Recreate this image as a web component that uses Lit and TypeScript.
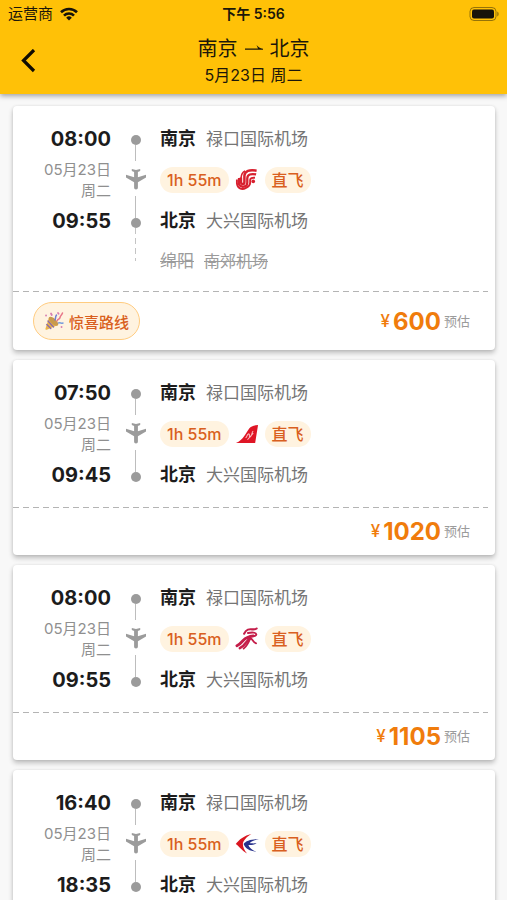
import { LitElement, html, css, svg, nothing, TemplateResult } from "lit";
import { customElement, property } from "lit/decorators.js";

type Airline = "airchina" | "sichuan" | "phoenix" | "eastern";

interface Flight {
  depart: string;
  arrive: string;
  airline: Airline;
  price: number;
  onward?: { city: string; airport: string };
}

const flights: Flight[] = [
  { depart: "08:00", arrive: "09:55", airline: "airchina", price: 600, onward: { city: "绵阳", airport: "南郊机场" } },
  { depart: "07:50", arrive: "09:45", airline: "sichuan", price: 1020 },
  { depart: "08:00", arrive: "09:55", airline: "phoenix", price: 1105 },
  { depart: "16:40", arrive: "18:35", airline: "eastern", price: 1180 },
];

const logos: Record<Airline, TemplateResult> = {
  airchina: svg`
    <g fill="none" stroke="#d8202f">
      <path stroke-width="2.600" d="M22.500 2.300C15 1 10.200 2.500 9.800 7.500V14c0 3-3.600 3-3.600 0V9.500"/>
      <path stroke-width="2.400" d="M22 6.200c-5.500-1-9 0-9.200 4v4.600c0 4.700-6.600 5.700-8.600 1.700V10"/>
      <path stroke-width="2" d="M2 11.500v4c.5 5 5 7 9 5 3-1.400 4.800-3 4.800-6V12c0-2 2-2.600 5-2.300"/>
      <path stroke-width="1.700" d="M6.300 10C6.500 6 7.500 4 10.500 2.500"/>
      <circle cx="19" cy="13.500" r="1.900" fill="#d8202f" stroke="none"/>
    </g>`,
  sichuan: svg`
    <path fill="#df1525" d="M1 21.500C9 18 11 11 15 6c1.500-2 4-3 9-3.500L21 21.500z"/>
    <path d="M11 16c2-1 1-3 3-4s0 4 2 3 1-5 3-6M13 18l6-7" fill="none" stroke="#fbb9bd" stroke-width="1.100"/>`,
  phoenix: svg`
    <g fill="none" stroke="#c41d49" stroke-linecap="round">
      <path stroke-width="2.200" d="M9.500 6.500C12 1 15.500 1.800 18.500 2c2 .1 3.200-.2 4-.9"/>
      <path stroke-width="2" d="M13.500 5.800c4-.9 8.500-.8 8.700 1.400.1 1.600-2.200 1.800-4.200 1.900"/>
      <path stroke-width="3" d="M19 8.800c-5 .6-8 2.200-10.500 4.700C6.300 16 4.500 17.800 2 19"/>
      <path stroke-width="2.600" d="M16 11c-4 2-4.500 7.500-11 10.500"/>
      <path stroke-width="1.900" d="M16 11c-1.600 4-3.500 8-7 11M16 11c2.800 1 2.500 4.500 6 5.500"/>
    </g>`,
  eastern: svg`
    <path fill="#d9151f" d="M17 1.500C10 3 4 7.500 .8 12c3 2 6 6.500 11.700 10-3-4-4.300-6.800-4.300-10 0-3.200 3.300-7 8.800-10.500z"/>
    <path fill="#28328c" d="M25 7c-7-.5-14 1.500-16 5 1.500 4.500 6.500 7.500 13 8-4.500-2-7.500-4.300-8-7 3 .2 6.500-.3 8.500-1.800-2 .2-5.500.3-7-.2C17 9.200 20.500 7.800 25 7z"/>`,
};

@customElement("status-bar")
class StatusBar extends LitElement {
  static styles = css`
    :host { display: grid; grid-template-columns: 1fr auto 1fr; align-items: center; height: 28px; padding: 0 8px; font-size: 14px; line-height: 20px; }
    .carrier { display: flex; align-items: center; gap: 7px; font-size: 15px; }
    .clock { font-weight: 600; }
    .battery { justify-self: end; }
    svg { display: block; }
  `;
  render() {
    return html`
      <span class="carrier">运营商
        <svg width="18" height="14" viewBox="0 0 18 14" fill="none" stroke="#17130a" stroke-width="2.600">
          <path d="M1 5.200a11.500 11.500 0 0 1 16 0M4 8.600a7 7 0 0 1 10 0"/>
          <path d="M9 13.500 6.200 10.700a4 4 0 0 1 5.600 0z" fill="#17130a" stroke="none"/>
        </svg>
      </span>
      <span class="clock">下午 5:56</span>
      <svg class="battery" width="30" height="14" viewBox="0 0 30 14" role="img" aria-label="电量">
        <rect x="1" y=".5" width="26" height="13" rx="4" fill="none" stroke="#17130a" stroke-opacity=".45"/>
        <rect x="3" y="2.500" width="22" height="9" rx="2" fill="#17130a"/>
        <path d="M28.300 4.500a3 3 0 0 1 0 5z" fill="#17130a" fill-opacity=".5"/>
      </svg>`;
  }
}

@customElement("flight-card")
class FlightCard extends LitElement {
  @property({ attribute: false }) flight!: Flight;

  static styles = css`
    :host { display: block; background: #fff; border-radius: 4px; box-shadow: 0 3px 5px rgba(0, 0, 0, 0.24), 0 0 3px rgba(0, 0, 0, 0.08); }
    svg { display: block; }
    .trip { display: grid; grid-template-columns: 98px 49px 1fr; grid-template-rows: 26px 56px 26px; padding: 20px 0 19px; align-items: center; }
    .trip.more { grid-template-rows: 26px 56px 26px 40px; padding-bottom: 17px; }
    .time { grid-column: 1; text-align: right; font-size: 20px; line-height: 26px; font-weight: 700; color: #1c1c1c; }
    .date { grid-column: 1; text-align: right; font-size: 15px; line-height: 21px; color: #8f8f8f; }
    .line { grid-column: 2; grid-row: 1 / -1; align-self: start; display: flex; flex-direction: column; align-items: center; padding-top: 9px; }
    .dot { width: 10px; height: 10px; border-radius: 50%; background: #9b9b9b; }
    .stem { width: 1px; height: 16px; background: #bdbdbd; }
    .plane { margin: 7px 0 6px; }
    .stem.long { height: 22px; }
    .dashes { width: 1px; height: 33px; background: repeating-linear-gradient(#c4c4c4 0 6px, transparent 6px 10px); }
    .place { grid-column: 3; display: flex; align-items: center; gap: 10px; white-space: nowrap; }
    .city { font-size: 18px; line-height: 26px; font-weight: 700; color: #1c1c1c; }
    .airport { font-size: 17px; line-height: 26px; color: #757575; }
    .onward { align-self: end; color: #9b9b9b; }
    .onward .city { font-size: 17px; font-weight: 400; color: inherit; text-decoration: line-through; }
    .onward .airport { font-size: 16px; color: inherit; text-decoration: line-through; }
    .tags { grid-column: 3; display: flex; align-items: center; gap: 6px; }
    .tag { padding: 0 7px; border-radius: 13px; background: #fff3e0; color: #d95f20; font-size: 16px; line-height: 26px; font-weight: 500; }
    .footer { display: flex; align-items: center; justify-content: space-between; padding: 10px 25px 10px 20px; }
    .rule { height: 1px; margin-right: 7px; background: repeating-linear-gradient(90deg, #b4b4b4 0 6px, transparent 6px 10px); }
    .lucky { display: flex; align-items: center; gap: 5px; box-sizing: border-box; height: 38px; margin: 0; padding: 0 10px; border: 1px solid #ffcc80; border-radius: 19px; background: #fff3e0; color: #d95f20; font: inherit; font-size: 15px; font-weight: 500; }
    .price { display: flex; align-items: center; margin-left: auto; color: #f07c0c; line-height: 27px; }
    .yen { font-size: 17px; font-weight: 500; margin-right: 3px; }
    .amount { font-size: 24px; font-weight: 700; }
    .note { margin-left: 3px; font-size: 13px; color: #9b9b9b; }
  `;

  render() {
    const f = this.flight;
    return html`
      <div class="trip ${f.onward ? "more" : ""}">
        <div class="line">
          <span class="dot"></span><span class="stem"></span>
          <svg class="plane" width="22" height="22" viewBox="0 0 22 22" fill="#9b9b9b">
            <path d="M11 21.500c-1.200 0-1.900-.9-1.900-2v-5.300L1 9.400V6.800l8.100 2.500V4L6.800 2.900V.9l4.200 1 4.200-1v2L12.900 4v5.300L21 6.800v2.600l-8.100 4.800v5.300c0 1.100-.7 2-1.900 2z"/>
          </svg>
          <span class="stem long"></span><span class="dot"></span>
          ${f.onward ? html`<span class="dashes"></span>` : nothing}
        </div>
        <time class="time">${f.depart}</time>
        <div class="place"><span class="city">南京</span><span class="airport">禄口国际机场</span></div>
        <div class="date">05月23日<br />周二</div>
        <div class="tags">
          <span class="tag">1h 55m</span>
          <svg width="24" height="24" viewBox="0 0 25 24">${logos[f.airline]}</svg>
          <span class="tag">直飞</span>
        </div>
        <time class="time">${f.arrive}</time>
        <div class="place"><span class="city">北京</span><span class="airport">大兴国际机场</span></div>
        ${f.onward
          ? html`<div class="place onward"><span class="city">${f.onward.city}</span><span class="airport">${f.onward.airport}</span></div>`
          : nothing}
      </div>
      <div class="rule"></div>
      <div class="footer">
        ${f.onward
          ? html`<button class="lucky" type="button">
              <svg width="20" height="20" viewBox="0 0 20 20" fill="none" stroke-linecap="round">
                <path d="M5 6.500 1.500 17.500c-.3 1 .4 1.500 1.300 1.200L14 14z" fill="#e9b34a"/>
                <ellipse cx="9.500" cy="10.200" rx="2.600" ry="6" transform="rotate(-48 9.500 10.200)" fill="#c99a4c"/>
                <path d="m4 10 5.500 6M2.800 13.500l4 4" stroke="#8c6ba8" stroke-width="1.400"/>
                <path d="M11 9c1-2 0-3 1.500-5" stroke="#6f7fd0" stroke-width="1.500"/>
                <path d="M13 10c1.500-3 2.500-1 3-3.500S18 4 18.500 2" stroke="#e8788b" stroke-width="1.500"/>
                <path d="M14.500 12c2-1 2.500.8 4.500 0" stroke="#7a9fdc" stroke-width="1.500"/>
                <path d="M2 4.500h.1M7 2.500l.8 1.500M14 2l.6.8M17.500 16h.1" stroke="#d87fb0" stroke-width="1.800"/>
              </svg>惊喜路线</button>`
          : nothing}
        <div class="price"><span class="yen">¥</span><span class="amount">${f.price}</span><span class="note">预估</span></div>
      </div>`;
  }
}

@customElement("app-root")
class AppRoot extends LitElement {
  static styles = css`
    :host { display: flex; flex-direction: column; height: 100vh; overflow: hidden; background: #f8f8f8; color: #1c170a; font-family: Inter, "Noto Sans CJK SC", sans-serif; }
    .top { flex: none; position: relative; background: #ffc107; box-shadow: 0 2px 5px rgba(0, 0, 0, 0.35); }
    .nav { display: grid; grid-template-columns: 56px 1fr 56px; align-items: center; height: 66px; }
    .back { display: grid; place-items: center; width: 56px; height: 56px; padding: 0; border: 0; background: none; color: #100c02; }
    .title { text-align: center; }
    .route { display: flex; align-items: center; justify-content: center; gap: 5px; margin: 0; font-size: 20px; line-height: 28px; font-weight: 400; }
    .route svg { margin: 0 1px; }
    .day { margin: 0; font-size: 16px; line-height: 24px; font-weight: 400; }
    .list { flex: 1; min-height: 0; display: flex; flex-direction: column; gap: 10px; padding: 12px 12px 12px 13px; overflow-y: auto; scrollbar-width: none; }
    flight-card { flex: none; }
  `;

  render() {
    return html`
      <header class="top">
        <status-bar></status-bar>
        <div class="nav">
          <button class="back" type="button" aria-label="返回">
            <svg width="15" height="24" viewBox="0 0 15 24" fill="none" stroke="currentColor" stroke-width="3.200"><path d="M13 1 2.500 11.500 13 22"/></svg>
          </button>
          <div class="title">
            <h1 class="route">南京
              <svg width="20" height="10" viewBox="0 0 20 10" fill="#1c170a"><path d="M1 4.600h13L12.500 1C14 3 16 4.200 19 4.800v1H1z"/></svg>
              北京</h1>
            <p class="day">5月23日 周二</p>
          </div>
        </div>
      </header>
      <main class="list">${flights.map((f) => html`<flight-card .flight=${f}></flight-card>`)}</main>`;
  }
}
